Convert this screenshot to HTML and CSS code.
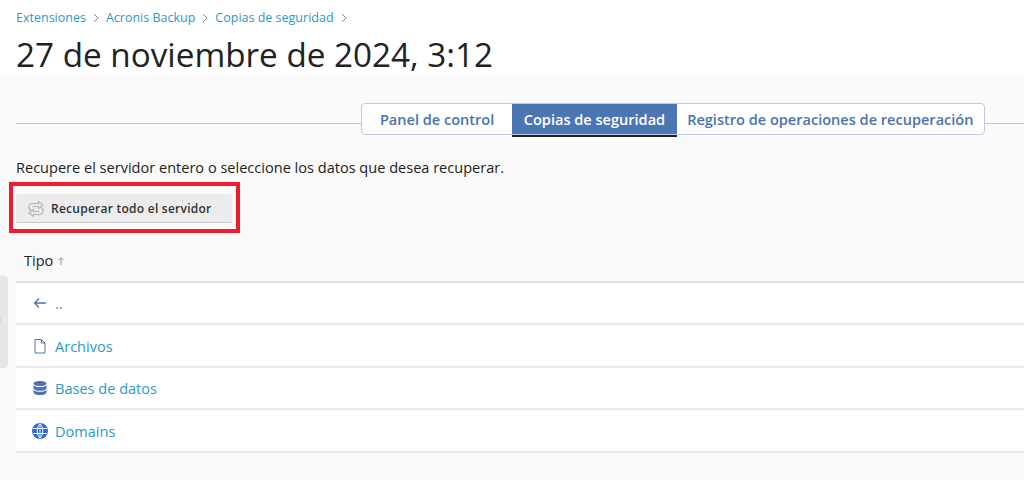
FILE: index.html
```html
<!DOCTYPE html>
<html lang="es">
<head>
<meta charset="utf-8">
<title>Copias de seguridad</title>
<link rel="stylesheet" href="styles.css">
</head>
<body>
<header class="page-head">
  <nav class="crumbs">
    <a>Extensiones</a><svg class="sep" viewBox="0 0 8 10"><path d="M2 1l4 4-4 4"/></svg>
    <a>Acronis Backup</a><svg class="sep" viewBox="0 0 8 10"><path d="M2 1l4 4-4 4"/></svg>
    <a>Copias de seguridad</a><svg class="sep" viewBox="0 0 8 10"><path d="M2 1l4 4-4 4"/></svg>
  </nav>
  <h1>27 de noviembre de 2024, 3:12</h1>
</header>
<main class="content">
  <div class="handle"><span class="handle-mark"></span></div>
  <div class="tabs-row">
    <div class="tabs">
      <a class="tab">Panel de control</a>
      <a class="tab active">Copias de seguridad</a>
      <a class="tab">Registro de operaciones de recuperación</a>
    </div>
  </div>
  <p class="hint">Recupere el servidor entero o seleccione los datos que desea recuperar.</p>
  <button class="btn">
    <svg class="btn-icon" viewBox="0 0 18 18"><path d="M5.500 6.500h6V8.500L16 5 11.500 1.500V3.500H5.500C1.500 3.500 .5 8.500 4 10.500M12.500 11.500h-6V9.500L2 13 6.500 16.500V14.500H12.500C16.500 14.500 17.500 9.500 14 7.500"/></svg>
    <span>Recuperar todo el servidor</span>
  </button>
  <div class="table-head">Tipo <svg class="sort" viewBox="0 0 8 10"><path d="M4 9V2M1.800 4L4 1.500 6.200 4"/></svg></div>
  <ul class="rows">
    <li class="row">
      <svg class="ico" viewBox="0 0 16 16"><path class="stroke" d="M14 8H3M7 3.500L2.500 8 7 12.500"/></svg>
      <a>..</a>
    </li>
    <li class="row">
      <svg class="ico" viewBox="0 0 16 16"><path class="stroke thin" d="M3 1.500h6.500L13 5V15H3zM9.500 1.500V5H13"/></svg>
      <a>Archivos</a>
    </li>
    <li class="row">
      <svg class="ico" viewBox="0 0 16 16"><path class="fill" d="M8 1c3.300 0 6.500 1 6.500 2.600S11.300 6.200 8 6.200 1.500 5.200 1.500 3.600 4.700 1 8 1zM1.500 5.300C2.800 6.600 5.500 7.100 8 7.100s5.200-.5 6.500-1.800v2.900C14.500 9.800 11.300 10.800 8 10.800S1.500 9.800 1.500 8.200zM1.500 9.900C2.800 11.200 5.500 11.700 8 11.700s5.200-.5 6.500-1.800v2.500C14.500 14 11.300 15 8 15s-6.500-1-6.500-2.600z"/></svg>
      <a>Bases de datos</a>
    </li>
    <li class="row">
      <svg class="ico" viewBox="0 0 16 16"><circle class="globe-bg" cx="8" cy="8" r="8"/><path class="globe" d="M8 .8v14.400M1 5.500h14M1 10.500h14M8 .8C4.300 4.500 4.300 11.500 8 15.200M8 .8c3.700 3.700 3.700 10.700 0 14.400"/></svg>
      <a>Domains</a>
    </li>
  </ul>
</main>
</body>
</html>
```
FILE: styles.css
```css
* { box-sizing: border-box; }
html, body { margin: 0; height: 100%; }
body {
  background: #fafafa;
  color: #222;
  font-family: "Open Sans", sans-serif;
  font-size: 14.55px;
  overflow: hidden;
}
.page-head {
  background: #fff;
  height: 75px;
  padding: 10px 16px 0;
}
.crumbs {
  display: flex;
  align-items: center;
  height: 16px;
  font-size: 12.5px;
  line-height: 16px;
  color: #2a9ac9;
}
.sep {
  width: 8px;
  height: 10px;
  margin: 0 6px;
  fill: none;
  stroke: #8b8b8b;
  stroke-width: 1;
}
h1 {
  margin: 8px 0 0;
  font-size: 33.25px;
  font-weight: 400;
  line-height: 40px;
  color: #222;
  white-space: nowrap;
}
.content {
  position: relative;
  padding: 28px 0 0 16px;
}
.handle {
  position: absolute;
  left: 0;
  top: 201px;
  width: 8px;
  height: 92px;
  background: #e6e6e6;
  border-radius: 0 4px 4px 0;
}
.handle-mark {
  position: absolute;
  left: -2px;
  top: 42px;
  width: 4px;
  height: 4px;
  border-left: 1px solid #777;
  border-bottom: 1px solid #777;
  transform: rotate(45deg);
}
.tabs-row {
  display: flex;
  justify-content: flex-end;
  padding-right: 39px;
  background: linear-gradient(#b9c6dc, #b9c6dc) 0 20px / 100% 1px no-repeat;
  height: 32px;
}
.tabs {
  display: flex;
  height: 32px;
  background: #fff;
  border: 1px solid #bfcbe0;
  border-radius: 4px;
}
.tab {
  display: flex;
  align-items: center;
  padding: 0 10.5px;
  color: #4a74b0;
  font-size: 14.55px;
  font-weight: 600;
  white-space: nowrap;
}
.tab:first-child { padding: 0 18px; }
.tab.active {
  padding: 0 11.5px;
  background: #4b76b3;
  color: #fff;
  box-shadow: 0 1px 0 #bfcbe0, 0 3px 0 #222;
}
.hint {
  margin: 0;
  padding-top: 23px;
  line-height: 19px;
  font-size: 14.55px;
}
.btn {
  position: relative;
  display: flex;
  align-items: center;
  width: 216px;
  height: 29px;
  margin-top: 17px;
  padding: 1px 0 0 11px;
  border: 0;
  border-bottom: 1px solid #c8c8c8;
  border-radius: 2px;
  background: #ececec;
  color: #333;
  font-family: inherit;
  font-size: 12px;
  font-weight: 600;
  letter-spacing: .25px;
}
.btn::after {
  content: "";
  position: absolute;
  inset: -12px -8px -11px -7px;
  border: 4px solid #ed1c2e;
}
.btn-icon {
  width: 18px;
  height: 18px;
  margin-right: 6px;
  fill: none;
  stroke: #b4b4b4;
  stroke-width: 1.1;
}
.table-head {
  display: flex;
  align-items: center;
  gap: 4px;
  height: 59.6px;
  padding: 16px 0 0 8px;
  font-size: 14.55px;
  border-bottom: 2px solid #e2e2e2;
}
.sort {
  width: 8px;
  height: 10px;
  margin-top: 2px;
  fill: none;
  stroke: #999;
}
.rows {
  list-style: none;
  margin: 0;
  padding: 0;
  background: #fff;
}
.row {
  display: flex;
  align-items: center;
  gap: 7px;
  height: 42.500px;
  padding: 1px 0 0 16px;
  border-bottom: 2px solid #e9e9e9;
  color: #2a9ac9;
  font-size: 14.55px;
}
.ico { width: 16px; height: 16px; flex: none; }
.stroke { fill: none; stroke: #4b76b3; stroke-width: 1.300; }
.thin { stroke-width: 1; }
.fill { fill: #4b76b3; }
.globe-bg { fill: #2f6bc9; }
.globe { fill: none; stroke: #fff; stroke-width: .9; }
```
